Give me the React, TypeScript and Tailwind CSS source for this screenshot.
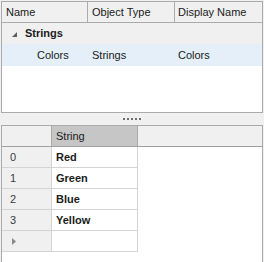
import React from 'react';

const rows = ['Red', 'Green', 'Blue', 'Yellow'];

function App() {
  return (
    <div className="w-[264px] h-[262px] overflow-hidden bg-[#f0f0f0] pt-px pl-px flex flex-col font-['Liberation_Sans',Arial,sans-serif] text-[11px] text-[#202020]">
      {/* tree list */}
      <div className="w-[262px] h-[112px] shrink-0 border border-[#ababab] bg-white flex flex-col">
        <div className="flex h-[21px] shrink-0 bg-[#f0f0f0] border-b border-[#ababab]">
          <div className="w-[86px] border-r border-[#ababab] pl-[4px] flex items-center">Name</div>
          <div className="w-[87px] border-r border-[#ababab] pl-[4px] flex items-center">Object Type</div>
          <div className="flex-1 pl-[3px] flex items-center">Display Name</div>
        </div>
        <div className="flex h-[21px] shrink-0 items-center bg-[#f0f0f0]">
          <svg width="5" height="5" viewBox="0 0 5 5" className="ml-[10px] mt-[2px]">
            <polygon points="5,0 5,5 0,5" fill="#5e5e5e" />
          </svg>
          <span className="ml-[8px] font-bold">Strings</span>
        </div>
        <div className="flex h-[22px] shrink-0 bg-[#e4eff9]">
          <div className="w-[86px] pl-[35px] flex items-center">Colors</div>
          <div className="w-[87px] pl-[4px] flex items-center">Strings</div>
          <div className="flex-1 pl-[3px] flex items-center">Colors</div>
        </div>
      </div>

      {/* splitter */}
      <div className="h-[12px] w-[262px] shrink-0 flex justify-center gap-[2px] pt-[5px]">
        {[0, 1, 2, 3, 4].map((i) => (
          <div key={i} className="w-[2px] h-[2px] bg-[#6e6e6e]" />
        ))}
      </div>

      {/* grid */}
      <div className="w-[262px] flex-1 border border-b-0 border-[#ababab] bg-white flex flex-col">
        <div className="flex h-[21px] shrink-0 bg-[#f0f0f0] border-b border-[#a0a0a0]">
          <div className="w-[50px] border-r border-[#ababab]" />
          <div className="w-[86px] bg-[#c6c6c6] border-r border-[#ababab] pl-[4px] flex items-center">String</div>
          <div className="flex-1" />
        </div>
        {rows.map((r, i) => (
          <div key={r} className="flex h-[21px] shrink-0">
            <div className="w-[50px] bg-[#f0f0f0] border-r border-b border-[#d4d4d4] pl-[8px] flex items-center text-[#3a3a3a]">{i}</div>
            <div className="w-[86px] border-r border-b border-[#d4d4d4] pl-[4px] flex items-center font-bold">{r}</div>
          </div>
        ))}
        <div className="flex h-[21px] shrink-0">
          <div className="w-[50px] bg-[#f0f0f0] border-r border-b border-[#d4d4d4] pl-[10px] flex items-center">
            <svg width="4" height="7" viewBox="0 0 4 7">
              <polygon points="0,0 4,3.5 0,7" fill="#8a8a8a" />
            </svg>
          </div>
          <div className="w-[86px] border-r border-b border-[#d4d4d4]" />
        </div>
      </div>
    </div>
  );
}

export default App;
